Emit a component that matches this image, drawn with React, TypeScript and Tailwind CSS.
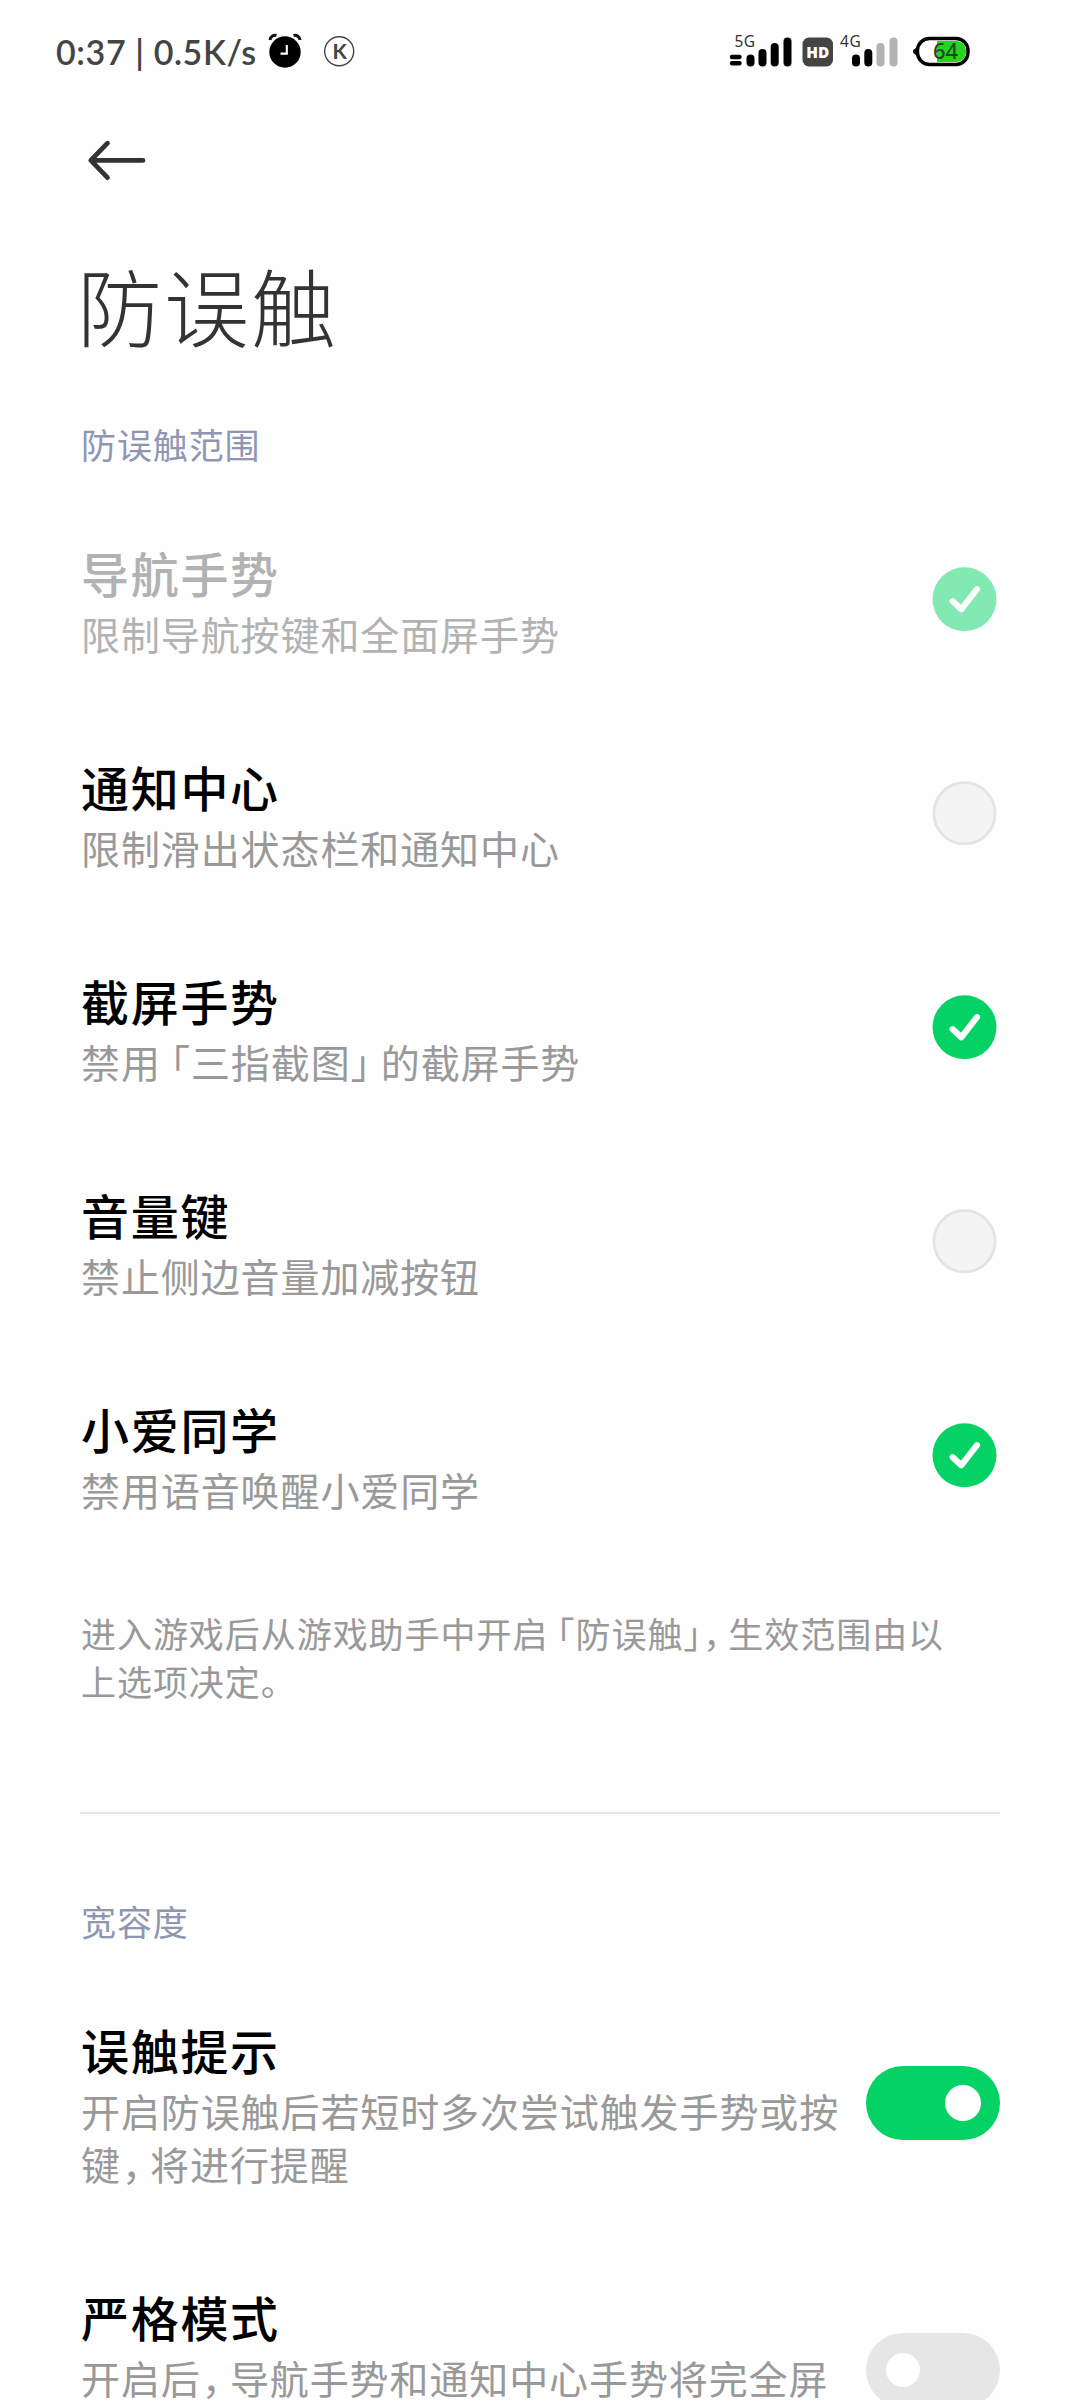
import React from "react";

type Option = { title: string; desc: React.ReactNode; checked: boolean; disabled?: boolean };

// Proportional CJK punctuation: half-width glyphs with a little side padding.
const Open = () => <span className="inline-block pl-[0.25em] [font-feature-settings:'halt']">「</span>;
const Close = () => <span className="inline-block pr-[0.25em] [font-feature-settings:'halt']">」</span>;
const Comma = () => <span className="inline-block pl-[1px] pr-[0.2em] [font-feature-settings:'halt']">，</span>;

const options: Option[] = [
  { title: "导航手势", desc: "限制导航按键和全面屏手势", checked: true, disabled: true },
  { title: "通知中心", desc: "限制滑出状态栏和通知中心", checked: false },
  {
    title: "截屏手势",
    desc: (
      <>
        禁用
        <Open />
        三指截图
        <Close />
        的截屏手势
      </>
    ),
    checked: true,
  },
  { title: "音量键", desc: "禁止侧边音量加减按钮", checked: false },
  { title: "小爱同学", desc: "禁用语音唤醒小爱同学", checked: true },
];

function StatusBar() {
  return (
    <div className="flex h-[104px] items-start pt-5 pl-[56px]">
      <div className="mt-[9px] w-[204px] whitespace-pre font-['Lato'] text-[34px] leading-[46px] font-semibold tracking-[0.600px] text-[#444]">
        0:37 | 0.5K/s
      </div>
      <svg className="ml-[8px] h-[60px] w-[34px]" viewBox="0 0 34 60">
        <path d="M2 20a5 5 0 0 1 6.5-4.5M32 20a5 5 0 0 0-6.5-4.5" stroke="#111" strokeWidth="3" fill="none" />
        <circle cx="17" cy="32" r="15.7" fill="#000" />
        <path d="M18.8 25v8.6H12.5" stroke="#fff" strokeWidth="2.1" fill="none" />
      </svg>
      <svg className="ml-[21px] h-[60px] w-[34px]" viewBox="0 0 34 60">
        <circle cx="16.2" cy="31.3" r="14.5" stroke="#444" strokeWidth="1.4" fill="none" />
        <text x="16.6" y="39" textAnchor="middle" fontFamily="Lato" fontWeight="700" fontSize="21" fill="#444">
          K
        </text>
      </svg>
      <svg className="ml-[372px] h-[60px] w-[64px]" viewBox="0 0 64 60">
        <text x="5.500" y="26.500" fontFamily="Noto Sans" fontSize="15.500" letterSpacing="0.3" fill="#333">
          5G
        </text>
        <path d="M3 37H10.500M3 43.200H10.500" stroke="#000" strokeWidth="4.400" strokeLinecap="round" />
        <g fill="#000">
          <rect x="17.500" y="34.500" width="8" height="12" rx="4" />
          <rect x="29.500" y="29" width="8" height="17.500" rx="4" />
          <rect x="41.700" y="23" width="8" height="23.500" rx="4" />
          <rect x="54.500" y="17.500" width="8" height="29" rx="4" />
        </g>
      </svg>
      <svg className="ml-[9px] h-[60px] w-[32px]" viewBox="0 0 32 60">
        <rect x="0.500" y="17.500" width="30.500" height="29" rx="6.500" fill="#444" />
        <text x="15.800" y="38" textAnchor="middle" fontFamily="Open Sans" fontWeight="800" fontSize="16" textLength="23" lengthAdjust="spacingAndGlyphs" fill="#fff">
          HD
        </text>
      </svg>
      <svg className="ml-[4px] h-[60px] w-[60px]" viewBox="0 0 60 60">
        <text x="2" y="26.500" fontFamily="Noto Sans" fontSize="15.500" letterSpacing="0.6" fill="#333">
          4G
        </text>
        <rect x="14" y="34.500" width="8" height="12" rx="4" fill="#000" />
        <rect x="26.300" y="29" width="8" height="17.500" rx="4" fill="#000" />
        <rect x="38.500" y="23" width="8" height="23.500" rx="4" fill="#b3b3b3" />
        <rect x="51.500" y="17.500" width="8" height="29" rx="4" fill="#b3b3b3" />
      </svg>
      <svg className="ml-[15px] h-[60px] w-[58px]" viewBox="0 0 58 60">
        <path d="M5 26.500L0.500 29.800Q-0.500 31.500 0.500 33.200L5 36.500Z" fill="#000" />
        <rect x="4.500" y="18.500" width="50.500" height="26" rx="12" fill="#fff" stroke="#000" strokeWidth="3.400" />
        <path d="M24 21H43.500a9.500 9.500 0 0 1 9.500 9.500V32.500a9.500 9.500 0 0 1-9.500 9.500H24Z" fill="#26d420" />
        <text x="32.500" y="39" textAnchor="middle" fontFamily="Noto Sans" fontWeight="500" fontSize="22" fill="#1c4a1c">
          64
        </text>
      </svg>
    </div>
  );
}

function CheckCircle({ checked, disabled }: { checked: boolean; disabled?: boolean }) {
  return (
    <svg className="mr-[3px] size-[65px] shrink-0" viewBox="0 0 65 65">
      {checked ? (
        <>
          <circle cx="32.500" cy="32.300" r="32" fill={disabled ? "#82e9b3" : "#04d265"} />
          <path d="M20.700 34.200L29.200 42.300L45 22.200" stroke="#fff" strokeWidth="6.200" strokeLinecap="round" strokeLinejoin="round" fill="none" />
        </>
      ) : (
        <circle cx="32.500" cy="32.300" r="30.600" fill="#f4f4f4" stroke="#e4e4e4" strokeWidth="2.800" />
      )}
    </svg>
  );
}

function Switch({ on }: { on: boolean }) {
  return on ? (
    <div className="flex h-[74px] w-[134px] shrink-0 items-center justify-end rounded-full bg-[#04d265] pr-[19px]">
      <div className="size-9 rounded-full bg-white" />
    </div>
  ) : (
    <div className="flex h-[74px] w-[134px] shrink-0 items-center rounded-full bg-[#e6e6e6] pl-5">
      <div className="size-[34px] rounded-full bg-white" />
    </div>
  );
}

function Row({ title, desc, disabled, children }: { title: string; desc: React.ReactNode; disabled?: boolean; children: React.ReactNode }) {
  return (
    <div className="flex items-center justify-between py-[46px]">
      <div className={disabled ? "ml-px pt-[2px] text-[#b2b2b2]" : "ml-px pt-[2px] text-black"}>
        <div className="text-[48px] leading-[64px] font-medium tracking-[1.700px]">{title}</div>
        <div className={disabled ? "mt-[3px] text-[39px] leading-[53px] tracking-[0.900px] whitespace-nowrap text-[#b2b2b2]" : "mt-[3px] text-[39px] leading-[53px] tracking-[0.900px] whitespace-nowrap text-[#999]"}>
          {desc}
        </div>
      </div>
      {children}
    </div>
  );
}

export default function App() {
  return (
    <div className="h-[2400px] w-[1080px] overflow-hidden bg-[#fefefe] font-['Noto_Sans_CJK_SC',sans-serif]" lang="zh-CN">
      <StatusBar />
      <main className="px-20">
        <svg className="mt-[34px] ml-[6px] h-[44px] w-[62px]" viewBox="0 0 62 44">
          <path d="M21.500 5.200L4.800 22.400L21.500 39.600M5 22.400H57" stroke="#333" strokeWidth="4.800" strokeLinecap="round" strokeLinejoin="round" fill="none" />
        </svg>
        <h1 className="mt-[62px] -ml-[3px] text-[85px] leading-[120px] font-light tracking-[2px] text-[#333]">防误触</h1>
        <h2 className="mt-[56px] ml-px text-[35px] leading-[48px] tracking-[0.900px] text-[#8f96b3]">防误触范围</h2>
        <div className="mt-[24px]">
          {options.map((o) => (
            <Row key={o.title} title={o.title} desc={o.desc} disabled={o.disabled}>
              <CheckCircle checked={o.checked} disabled={o.disabled} />
            </Row>
          ))}
        </div>
        <p className="mt-[47px] ml-px text-[35px] leading-[48px] tracking-[0.950px] whitespace-nowrap text-[#999]">
          进入游戏后从游戏助手中开启
          <Open />
          防误触
          <span className="inline-block [font-feature-settings:'halt']">」</span>
          <Comma />
          生效范围由以
          <br />
          上选项决定。
        </p>
        <hr className="mt-[107px] h-[2px] border-0 bg-[#e5e5e5]" />
        <h2 className="mt-[83px] ml-px text-[35px] leading-[48px] tracking-[0.900px] text-[#8f96b3]">宽容度</h2>
        <div className="mt-[24px]">
          <Row
            title="误触提示"
            desc={
              <>
                开启防误触后若短时多次尝试触发手势或按
                <br />键<Comma />
                将进行提醒
              </>
            }
          >
            <Switch on />
          </Row>
          <Row
            title="严格模式"
            desc={
              <>
                开启后
                <Comma />
                导航手势和通知中心手势将完全屏
                <br />
                &nbsp;
              </>
            }
          >
            <Switch on={false} />
          </Row>
        </div>
      </main>
    </div>
  );
}
